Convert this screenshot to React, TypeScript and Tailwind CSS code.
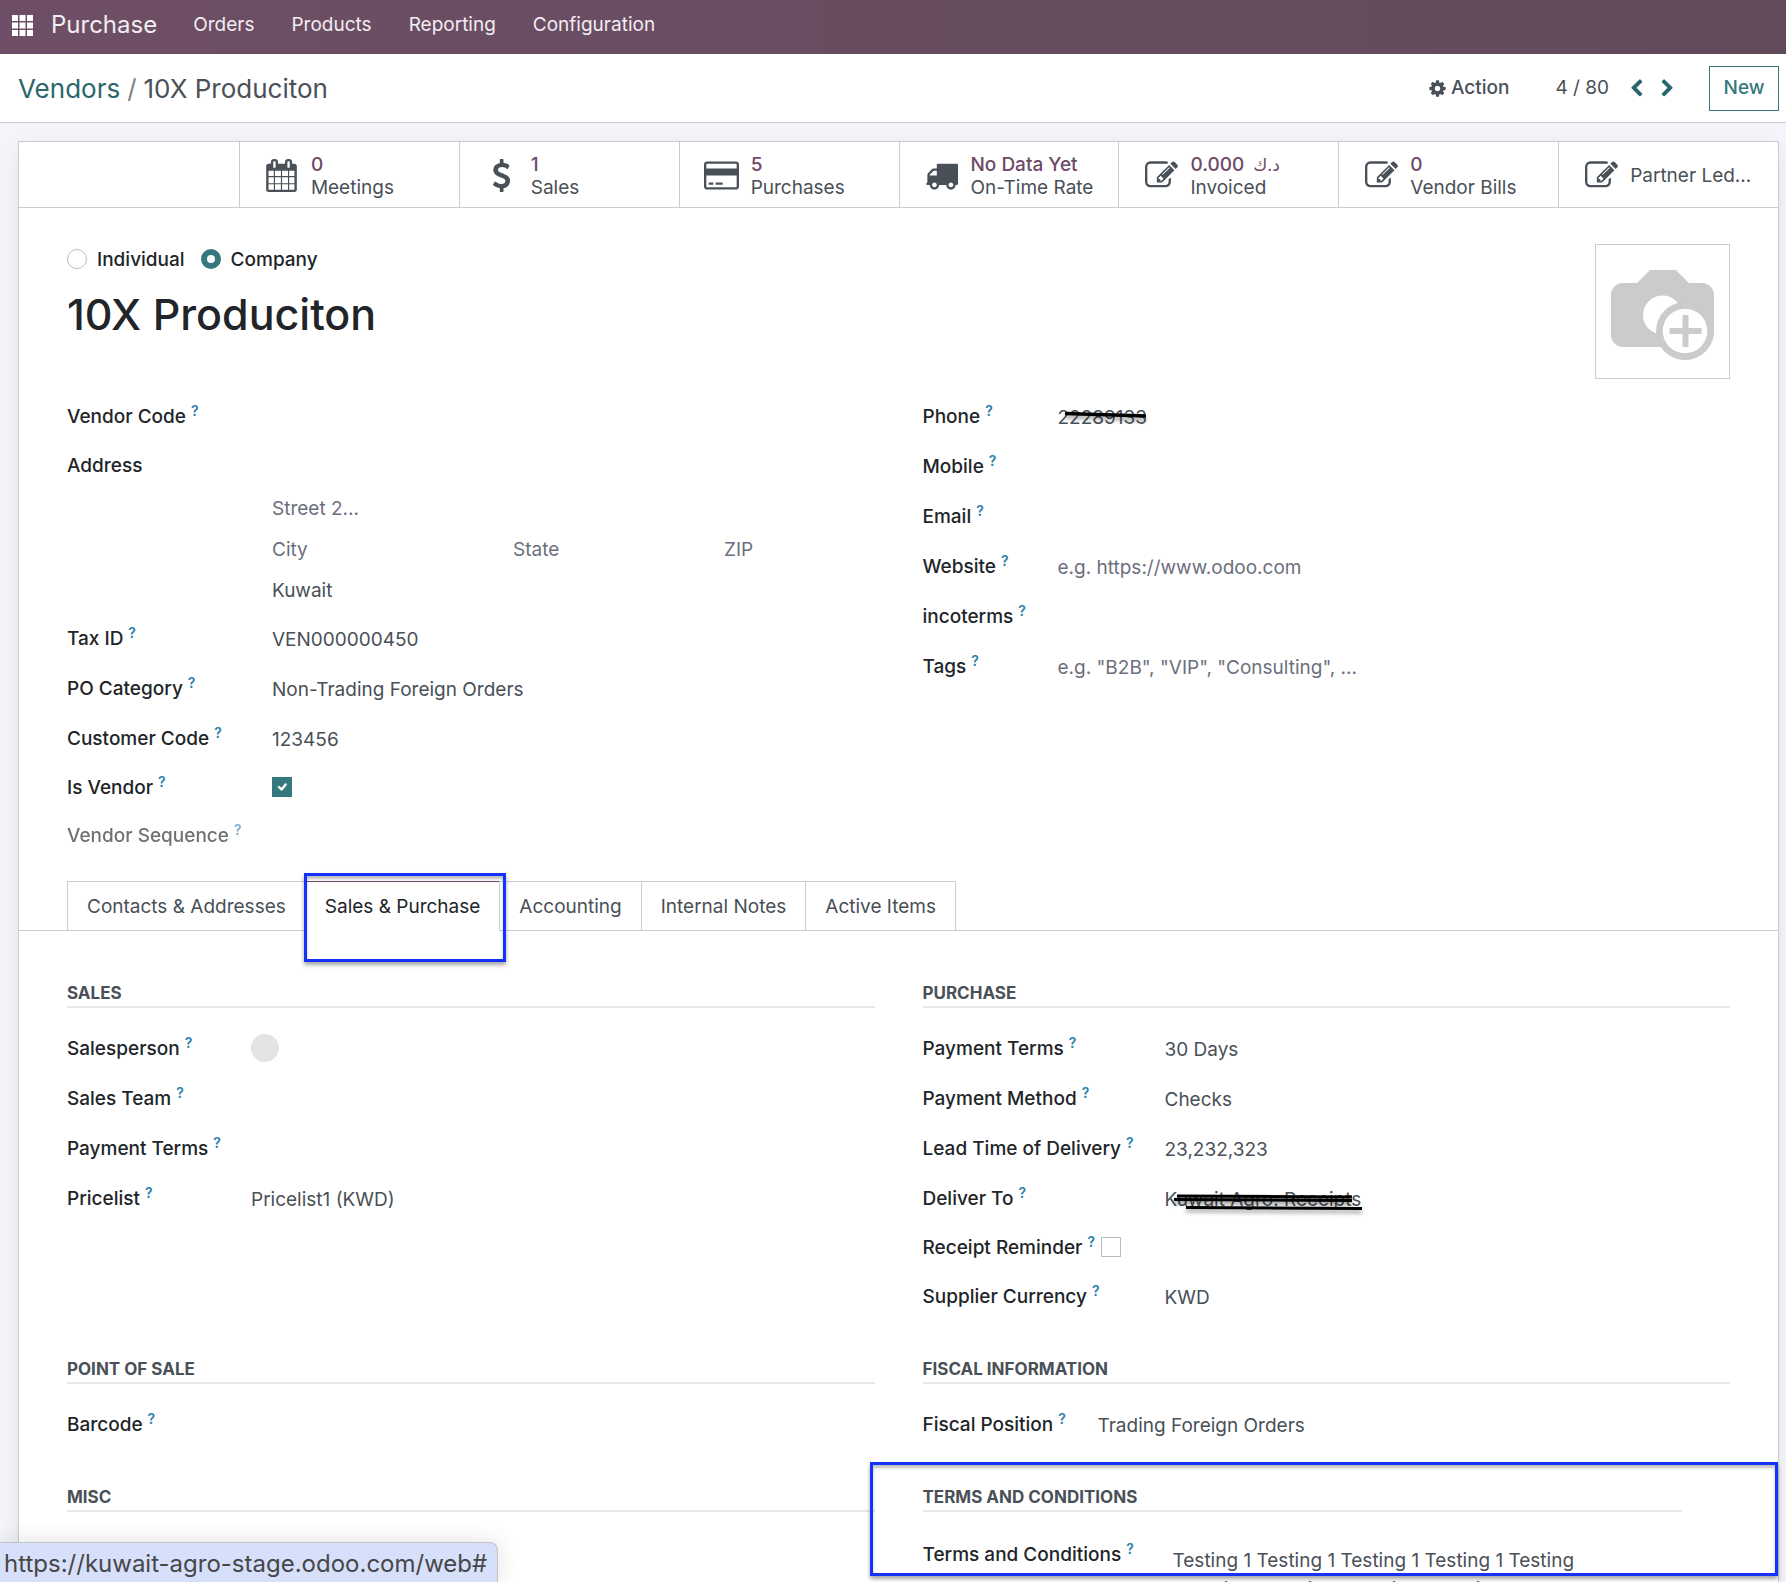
import React, { ReactNode, useId } from "react";

const icons = {
  calendar:
    "M192 1664h288v-288h-288v288zm352 0h320v-288h-320v288zm-352-352h288v-320h-288v320zm352 0h320v-320h-320v320zm-352-384h288v-288h-288v288zm736 736h320v-288h-320v288zm-384-736h320v-288h-320v288zm768 736h288v-288h-288v288zm-384-352h320v-320h-320v320zm-352-864v-288q0-13-9.5-22.5t-22.5-9.5h-64q-13 0-22.500 9.500t-9.500 22.500v288q0 13 9.500 22.500t22.500 9.500h64q13 0 22.500-9.500t9.500-22.500zm736 864h288v-320h-288v320zm-384-384h320v-288h-320v288zm384 0h288v-288h-288v288zm32-480v-288q0-13-9.500-22.500t-22.500-9.500h-64q-13 0-22.500 9.500t-9.500 22.500v288q0 13 9.500 22.500t22.500 9.500h64q13 0 22.500-9.500t9.500-22.500zm384-64v1280q0 52-38 90t-90 38h-1408q-52 0-90-38t-38-90v-1280q0-52 38-90t90-38h128v-96q0-66 47-113t113-47h64q66 0 113 47t47 113v96h384v-96q0-66 47-113t113-47h64q66 0 113 47t47 113v96h128q52 0 90 38t38 90z",
  card: "M1760 128q66 0 113 47t47 113v1216q0 66-47 113t-113 47h-1600q-66 0-113-47t-47-113v-1216q0-66 47-113t113-47h1600zm-1600 128q-13 0-22.500 9.500t-9.500 22.500v224h1664v-224q0-13-9.500-22.500t-22.500-9.500h-1600zm1600 1280q13 0 22.500-9.500t9.500-22.500v-608h-1664v608q0 13 9.500 22.500t22.500 9.500h1600zm-1504-128v-128h256v128h-256zm384 0v-128h384v128h-384z",
  truck:
    "M640 1408q0-52-38-90t-90-38-90 38-38 90 38 90 90 38 90-38 38-90zm-384-512h384v-256h-158q-13 0-22 9l-195 195q-9 9-9 22v30zm1280 512q0-52-38-90t-90-38-90 38-38 90 38 90 90 38 90-38 38-90zm256-1088v1024q0 15-4 26.500t-13.500 18.500-16.500 11.500-23.500 6-22.500 2-25.500 0-22.500-.5q0 106-75 181t-181 75-181-75-75-181h-384q0 106-75 181t-181 75-181-75-75-181h-64q-3 0-22.500.5t-25.500 0-22.500-2-23.500-6-16.500-11.500-13.500-18.500-4-26.500q0-26 19-45t45-19v-320q0-8-.5-35t0-38 2.500-34.500 6.500-37 14-30.500 22.500-30l198-198q19-19 50.500-32t58.500-13h160v-192q0-26 19-45t45-19h1024q26 0 45 19t19 45z",
  edit: "M888 1184l116-116-152-152-116 116v56h96v96h56zm440-720q-16-16-33 1l-350 350q-17 17-1 33t33-1l350-350q17-17 1-33zm80 594v190q0 119-84.500 203.500t-203.500 84.500h-832q-119 0-203.500-84.500t-84.500-203.500v-832q0-119 84.500-203.500t203.500-84.500h832q63 0 117 25 15 7 18 23 3 17-9 29l-49 49q-14 14-32 8-23-6-45-6h-832q-66 0-113 47t-47 113v832q0 66 47 113t113 47h832q66 0 113-47t47-113v-126q0-13 9-22l64-64q15-15 35-7t20 29zm-96-738l288 288-672 672h-288v-288zm444 132l-92 92-288-288 92-92q28-28 68-28t68 28l152 152q28 28 28 68t-28 68z",
  dollar:
    "M1362 1185q0 153-99.500 263.500t-258.500 136.500v175q0 14-9 23t-23 9h-135q-13 0-22.500-9.500t-9.500-22.500v-175q-66-9-127.500-31t-101.500-44.500-74-48-46.500-37.500-17.500-18q-17-21-2-41l103-135q7-10 23-12 15-2 24 9l2 2q113 99 243 125 37 8 74 8 81 0 142.500-43t61.500-122q0-28-15-53t-33.500-42-58.500-37.500-66-32-80-32.500q-39-16-61.500-25t-61.500-26.500-62.500-31-56.500-35.500-53.500-42.500-43.500-49-35.500-58-21-66.500-8.500-78q0-138 98-242t255-134v-180q0-13 9.500-22.500t22.500-9.500h135q14 0 23 9t9 23v176q57 6 110.500 23t87 33.500 63.500 37.500 39 29 15 14q17 18 5 38l-81 146q-8 15-23 16-14 3-27-7-3-3-14.500-12t-39-26.500-58.500-32-74.500-26-85.500-11.500q-95 0-155 43t-60 111q0 26 8.500 48t29.500 41.500 39.500 33 56 31 60.500 27 70 27.500q53 20 81 31.500t76 35 75.500 42.500 62 50 53 63.500 31.500 76.500 13 94z",
  cog: "M1152 896q0-106-75-181t-181-75-181 75-75 181 75 181 181 75 181-75 75-181zm512-109v222q0 12-8 23t-20 13l-185 28q-19 54-39 91 35 50 107 138 10 12 10 25t-9 23q-27 37-99 108t-94 71q-12 0-26-9l-138-108q-44 23-91 38-16 136-29 186-7 28-36 28h-222q-14 0-24.500-8.500t-11.500-21.500l-28-184q-49-16-90-37l-141 107q-10 9-25 9-14 0-25-11-126-114-165-168-7-10-7-23 0-12 8-23 15-21 51-66.500t54-70.500q-27-50-41-99l-183-27q-13-2-21-12.500t-8-23.500v-222q0-12 8-23t19-13l186-28q14-46 39-92-40-57-107-138-10-12-10-24 0-10 9-23 26-36 98.500-107.500t94.500-71.500q13 0 26 10l138 107q44-23 91-38 16-136 29-186 7-28 36-28h222q14 0 24.500 8.500t11.500 21.500l28 184q49 16 90 37l142-107q9-9 24-9 13 0 25 10 129 119 165 170 7 8 7 22 0 12-8 23-15 21-51 66.500t-54 70.500q26 50 41 98l183 28q13 2 21 12.500t8 23.500z",
  left: "M1427 301l-531 531 531 531q19 19 19 45t-19 45l-166 166q-19 19-45 19t-45-19l-742-742q-19-19-19-45t19-45l742-742q19-19 45-19t45 19l166 166q19 19 19 45t-19 45z",
  right:
    "M1363 877l-742 742q-19 19-45 19t-45-19l-166-166q-19-19-19-45t19-45l531-531-531-531q-19-19-19-45t19-45l166-166q19-19 45-19t45 19l742 742q19 19 19 45t-19 45z",
};

function Icon({ name, className, wide }: { name: keyof typeof icons; className: string; wide?: boolean }) {
  return (
    <svg viewBox={wide ? "0 0 1920 1792" : "0 0 1792 1792"} className={className} fill="currentColor" aria-hidden="true">
      <path d={icons[name]} />
    </svg>
  );
}

function Help() {
  return <sup className="relative -top-[7px] ml-[5px] align-baseline text-[14px] leading-none font-semibold text-[#2b81ab]">?</sup>;
}

function Field({
  label,
  labelWidth,
  children,
  value,
  placeholder,
  help = true,
  muted,
  height = "h-[50px]",
}: {
  label: string;
  labelWidth: string;
  children?: ReactNode;
  value?: string;
  placeholder?: string;
  help?: boolean;
  muted?: boolean;
  height?: string;
}) {
  const id = useId();
  return (
    <div className={`flex items-center ${height}`}>
      <label htmlFor={id} className={`shrink-0 pt-0.5 font-medium whitespace-nowrap text-[#212529] ${labelWidth} ${muted ? "opacity-65" : ""}`}>
        {label}
        {help && <Help />}
      </label>
      <div className="relative min-w-0 flex-1 pt-1">
        <input id={id} type="text" defaultValue={value} placeholder={placeholder} className="block h-7 w-full bg-transparent outline-none placeholder:text-[#6b6f7d]" />
        {children}
      </div>
    </div>
  );
}

function CheckField({ label, labelWidth, checked }: { label: string; labelWidth: string; checked?: boolean }) {
  const id = useId();
  return (
    <div className="flex h-12 items-center">
      <label htmlFor={id} className={`shrink-0 pt-0.5 font-medium whitespace-nowrap text-[#212529] ${labelWidth}`}>
        {label}
        <Help />
      </label>
      <span className="relative block size-5">
        <input id={id} type="checkbox" defaultChecked={checked} className="block size-5 appearance-none border border-[#b9bcc0] bg-white checked:border-[#35797e] checked:bg-[#35797e]" />
        {checked && (
          <svg viewBox="0 0 20 20" className="pointer-events-none absolute inset-0 size-5" fill="none" stroke="white" strokeWidth="2.4" strokeLinecap="round" strokeLinejoin="round" aria-hidden="true">
            <path d="M7 10l2.600 2.500 4-5" />
          </svg>
        )}
      </span>
    </div>
  );
}

function Group({ title, children, className = "" }: { title: string; children?: ReactNode; className?: string }) {
  return (
    <section className={className}>
      <h2 className="mb-[15px] border-b-2 border-[#e6e7e9] text-[17px] leading-[25px] font-bold text-[#495057] uppercase">{title}</h2>
      {children}
    </section>
  );
}

function Stat({ icon, value, label, wide }: { icon: keyof typeof icons; value?: ReactNode; label: string; wide?: boolean }) {
  return (
    <button type="button" className="flex min-w-0 items-center border-l border-[#c9ccd2] pt-0.5 text-left">
      <span className="ml-[22px] flex w-10 shrink-0 justify-center text-[#495057]">
        <Icon name={icon} wide={wide} className={wide ? "h-[33px] w-[35px]" : "size-[33px]"} />
      </span>
      <span className="ml-[9px] block min-w-0 leading-[23px]">
        {value && <span className="block h-[23px] font-medium whitespace-nowrap text-[#6c4a66]">{value}</span>}
        <span className="block whitespace-nowrap">{label}</span>
      </span>
    </button>
  );
}

function Radio({ label, checked }: { label: string; checked?: boolean }) {
  return (
    <label className="flex items-center gap-2.5 font-medium text-[#212529]">
      <input type="radio" name="company_type" defaultChecked={checked} className="size-5 appearance-none rounded-full border border-[#b9bcc0] bg-white checked:border-[6px] checked:border-[#35797e]" />
      <span className="pt-0.5">{label}</span>
    </label>
  );
}

const tabs = ["Contacts & Addresses", "Sales & Purchase", "Accounting", "Internal Notes", "Active Items"];

const highlight = "pointer-events-none absolute border-[3px] border-[#1432fb] shadow-[0_3px_4px_rgba(0,0,0,0.35),inset_0_3px_3px_rgba(0,0,0,0.25)]";

export default function App() {
  return (
    <div className="relative flex h-screen flex-col overflow-hidden bg-[#f4f5fa] font-['Inter','DejaVu_Sans',sans-serif] text-[19px] leading-7 text-[#495057]">
      <nav className="flex h-[54px] shrink-0 items-center bg-linear-to-r from-[#6e4e66] to-[#614b5b] pb-1 pl-3 text-[#f1edf0]">
        <button type="button" aria-label="Apps">
          <svg viewBox="0 0 21 21" className="size-[21px]" fill="white" aria-hidden="true">
            {[0, 7.5, 15].map((y) => [0, 7.5, 15].map((x) => <rect key={`${x}-${y}`} x={x} y={y} width="6" height="6" />))}
          </svg>
        </button>
        <a href="#purchase" className="ml-[18px] text-[24px]">Purchase</a>
        <div className="ml-9 flex gap-[37px]">
          <a href="#orders">Orders</a>
          <a href="#products">Products</a>
          <a href="#reporting">Reporting</a>
          <a href="#configuration">Configuration</a>
        </div>
      </nav>

      <header className="flex h-[69px] shrink-0 items-center border-b border-[#c9ccd2] bg-white pr-[7px] pl-[18px]">
        <div className="flex gap-[7px] pt-0.5 text-[26px]">
          <a href="#vendors" className="text-[#2a666b]">Vendors</a>
          <span className="text-[#7c8087]">/</span>
          <span>10X Produciton</span>
        </div>
        <button type="button" className="ml-auto flex items-center gap-1 font-medium">
          <Icon name="cog" className="size-[19px]" />
          Action
        </button>
        <span className="ml-[46px]">4 / 80</span>
        <button type="button" aria-label="Previous" className="ml-[18px] text-[#2a666b]">
          <Icon name="left" className="size-[19px]" />
        </button>
        <button type="button" aria-label="Next" className="ml-3 text-[#2a666b]">
          <Icon name="right" className="size-[19px]" />
        </button>
        <button type="button" className="ml-8 h-[45px] w-[70px] border border-[#35797e] font-medium text-[#35797e]">New</button>
      </header>

      <main className="min-h-0 flex-1 pt-[18px] pr-[7px] pl-[18px]">
        <div className="min-h-[1500px] border border-[#c9ccd2] bg-white shadow-[0_5px_20px_-5px_rgba(0,0,0,0.12)]">
          <div className="grid h-[66px] grid-cols-8 border-b border-[#c9ccd2]">
            <div />
            <Stat icon="calendar" value="0" label="Meetings" />
            <Stat icon="dollar" value="1" label="Sales" />
            <Stat icon="card" value="5" label="Purchases" wide />
            <Stat icon="truck" value="No Data Yet" label="On-Time Rate" />
            <Stat
              icon="edit"
              value={
                <>
                  0.000 <span className="ml-1 text-[17px] font-normal" lang="ar">د.ك</span>
                </>
              }
              label="Invoiced"
            />
            <Stat icon="edit" value="0" label="Vendor Bills" />
            <Stat icon="edit" label="Partner Led..." />
          </div>

          <div className="px-12 pt-9">
            <div className="flex items-start justify-between">
              <div>
                <div className="flex gap-4">
                  <Radio label="Individual" />
                  <Radio label="Company" checked />
                </div>
                <h1 className="mt-3.5 text-[43px] leading-[52px] font-medium text-[#212529]">10X Produciton</h1>
              </div>
              <button type="button" aria-label="Upload image" className="size-[135px] border border-[#c9ccd2]">
                <svg viewBox="0 0 133 133" className="size-full" aria-hidden="true">
                  <path d="M54 25h26l13 13h13a12 12 0 0 1 12 12v36a29 29 0 0 1-53 16H27a12 12 0 0 1-12-12V50a12 12 0 0 1 12-12h14z" fill="#cbcbcb" />
                  <circle cx="66.500" cy="70" r="19.500" fill="white" />
                  <circle cx="89" cy="86" r="29" fill="#cbcbcb" />
                  <circle cx="89" cy="86" r="22.300" fill="white" />
                  <path d="M86.500 70h6v13h13v6h-13v13h-6V89h-13v-6h13z" fill="#cbcbcb" />
                </svg>
              </button>
            </div>

            <div className="mt-3 grid grid-cols-2 gap-x-12">
              <div>
                <Field label="Vendor Code" labelWidth="w-[205px]" />
                <Field label="Address" labelWidth="w-[205px]" help={false} height="h-12" />
                <div className="mb-px ml-[205px]">
                  <input aria-label="Street 2" placeholder="Street 2..." className="block h-[41px] w-full pb-0.5 outline-none placeholder:text-[#6b6f7d]" />
                  <div className="flex h-[41px]">
                    <input aria-label="City" placeholder="City" className="w-[241px] pb-0.5 outline-none placeholder:text-[#6b6f7d]" />
                    <input aria-label="State" placeholder="State" className="w-[211px] pb-0.5 outline-none placeholder:text-[#6b6f7d]" />
                    <input aria-label="ZIP" placeholder="ZIP" className="w-[120px] pb-0.5 outline-none placeholder:text-[#6b6f7d]" />
                  </div>
                  <input aria-label="Country" defaultValue="Kuwait" className="block h-[41px] w-full pb-0.5 outline-none" />
                </div>
                <Field label="Tax ID" labelWidth="w-[205px]" value="VEN000000450" />
                <Field label="PO Category" labelWidth="w-[205px]" value="Non-Trading Foreign Orders" />
                <Field label="Customer Code" labelWidth="w-[205px]" value="123456" />
                <CheckField label="Is Vendor" labelWidth="w-[205px]" checked />
                <Field label="Vendor Sequence" labelWidth="w-[205px]" muted height="h-12" />
              </div>
              <div>
                <Field label="Phone" labelWidth="w-[135px]" value="22289133">
                  <svg
                    viewBox="0 0 100 16"
                    className="pointer-events-none absolute top-2.5 left-0 h-4 w-[100px] overflow-visible drop-shadow-[0_3px_2px_rgba(0,0,0,0.4)]"
                    aria-hidden="true"
                  >
                    <path d="M7 3.500l81 2.500" stroke="#000" strokeWidth="3.500" />
                  </svg>
                </Field>
                <Field label="Mobile" labelWidth="w-[135px]" />
                <Field label="Email" labelWidth="w-[135px]" />
                <Field label="Website" labelWidth="w-[135px]" placeholder="e.g. https://www.odoo.com" />
                <Field label="incoterms" labelWidth="w-[135px]" />
                <Field label="Tags" labelWidth="w-[135px]" placeholder={'e.g. "B2B", "VIP", "Consulting", ...'} />
              </div>
            </div>
          </div>

          <div role="tablist" className="mt-[22px] flex border-b border-[#c9ccd2] px-12">
            {tabs.map((tab, i) => (
              <div key={tab} className="relative -mb-px -ml-px first:ml-0">
                <button
                  type="button"
                  role="tab"
                  aria-selected={i === 1}
                  className={
                    i === 1
                      ? "block h-[50px] border border-t-[#6c4a66] border-r-[#c9ccd2] border-b-white border-l-[#c9ccd2] bg-white px-[19px] pt-0.5 whitespace-nowrap text-[#212529]"
                      : "block h-[50px] border border-[#c9ccd2] px-[19px] pt-0.5 whitespace-nowrap"
                  }
                >
                  {tab}
                </button>
                {i === 1 && <span className={`${highlight} -top-2 -right-1.5 -left-px z-10 h-[89px]`} />}
              </div>
            ))}
          </div>

          <div className="grid grid-cols-2 gap-x-12 gap-y-9 px-12 pt-[50px]">
            <Group title="Sales">
              <Field label="Salesperson" labelWidth="w-[184px]">
                <span className="absolute top-0.5 left-0 size-7 rounded-full bg-[#e4e4e4]" />
              </Field>
              <Field label="Sales Team" labelWidth="w-[184px]" />
              <Field label="Payment Terms" labelWidth="w-[184px]" />
              <Field label="Pricelist" labelWidth="w-[184px]" value="Pricelist1 (KWD)" />
            </Group>
            <Group title="Purchase">
              <Field label="Payment Terms" labelWidth="w-[242px]" value="30 Days" />
              <Field label="Payment Method" labelWidth="w-[242px]" value="Checks" />
              <Field label="Lead Time of Delivery" labelWidth="w-[242px]" value="23,232,323" />
              <Field label="Deliver To" labelWidth="w-[242px]" value="Kuwait Agro: Receipts">
                <svg
                  viewBox="0 0 200 30"
                  className="pointer-events-none absolute top-1 left-0 h-[30px] w-[200px] overflow-visible drop-shadow-[0_3px_2px_rgba(0,0,0,0.4)]"
                  aria-hidden="true"
                >
                  <path d="M12 10l175 1M9 13.500l178 1M21 21.500l176 1" stroke="#000" strokeWidth="3" fill="none" />
                </svg>
              </Field>
              <CheckField label="Receipt Reminder" labelWidth="pr-1.5" />
              <Field label="Supplier Currency" labelWidth="w-[242px]" value="KWD" />
            </Group>
            <Group title="Point of Sale">
              <Field label="Barcode" labelWidth="w-[184px]" />
            </Group>
            <Group title="Fiscal Information">
              <Field label="Fiscal Position" labelWidth="w-[175px]" value="Trading Foreign Orders" />
            </Group>
            <Group title="Misc" />
            <div className="relative">
              <Group title="Terms and Conditions" className="pr-12">
                <div className="flex">
                  <label htmlFor="terms" className="mt-3.5 w-[250px] shrink-0 font-medium whitespace-nowrap text-[#212529]">
                    Terms and Conditions
                    <Help />
                  </label>
                  <textarea
                    id="terms"
                    className="mt-[19px] h-24 w-[408px] resize-none overflow-hidden leading-[29px] outline-none"
                    defaultValue="Testing 1 Testing 1 Testing 1 Testing 1 Testing 1 Testing 1 Testing 1 Testing 1 Testing 1 Testing 1"
                  />
                </div>
              </Group>
              <span className={`${highlight} -top-[23px] -right-12 -left-[53px] h-[114px]`} />
            </div>
          </div>
        </div>
      </main>

      <div className="absolute bottom-0 left-0 flex h-10 items-center rounded-tr-lg border-t border-r border-[#c3c4c8] bg-[#d6e0fb] pt-0.5 pr-2.5 pl-1 text-[24px] text-[#474747] shadow-[0_0_24px_rgba(0,0,0,0.12)]">
        https://kuwait-agro-stage.odoo.com/web#
      </div>
    </div>
  );
}
